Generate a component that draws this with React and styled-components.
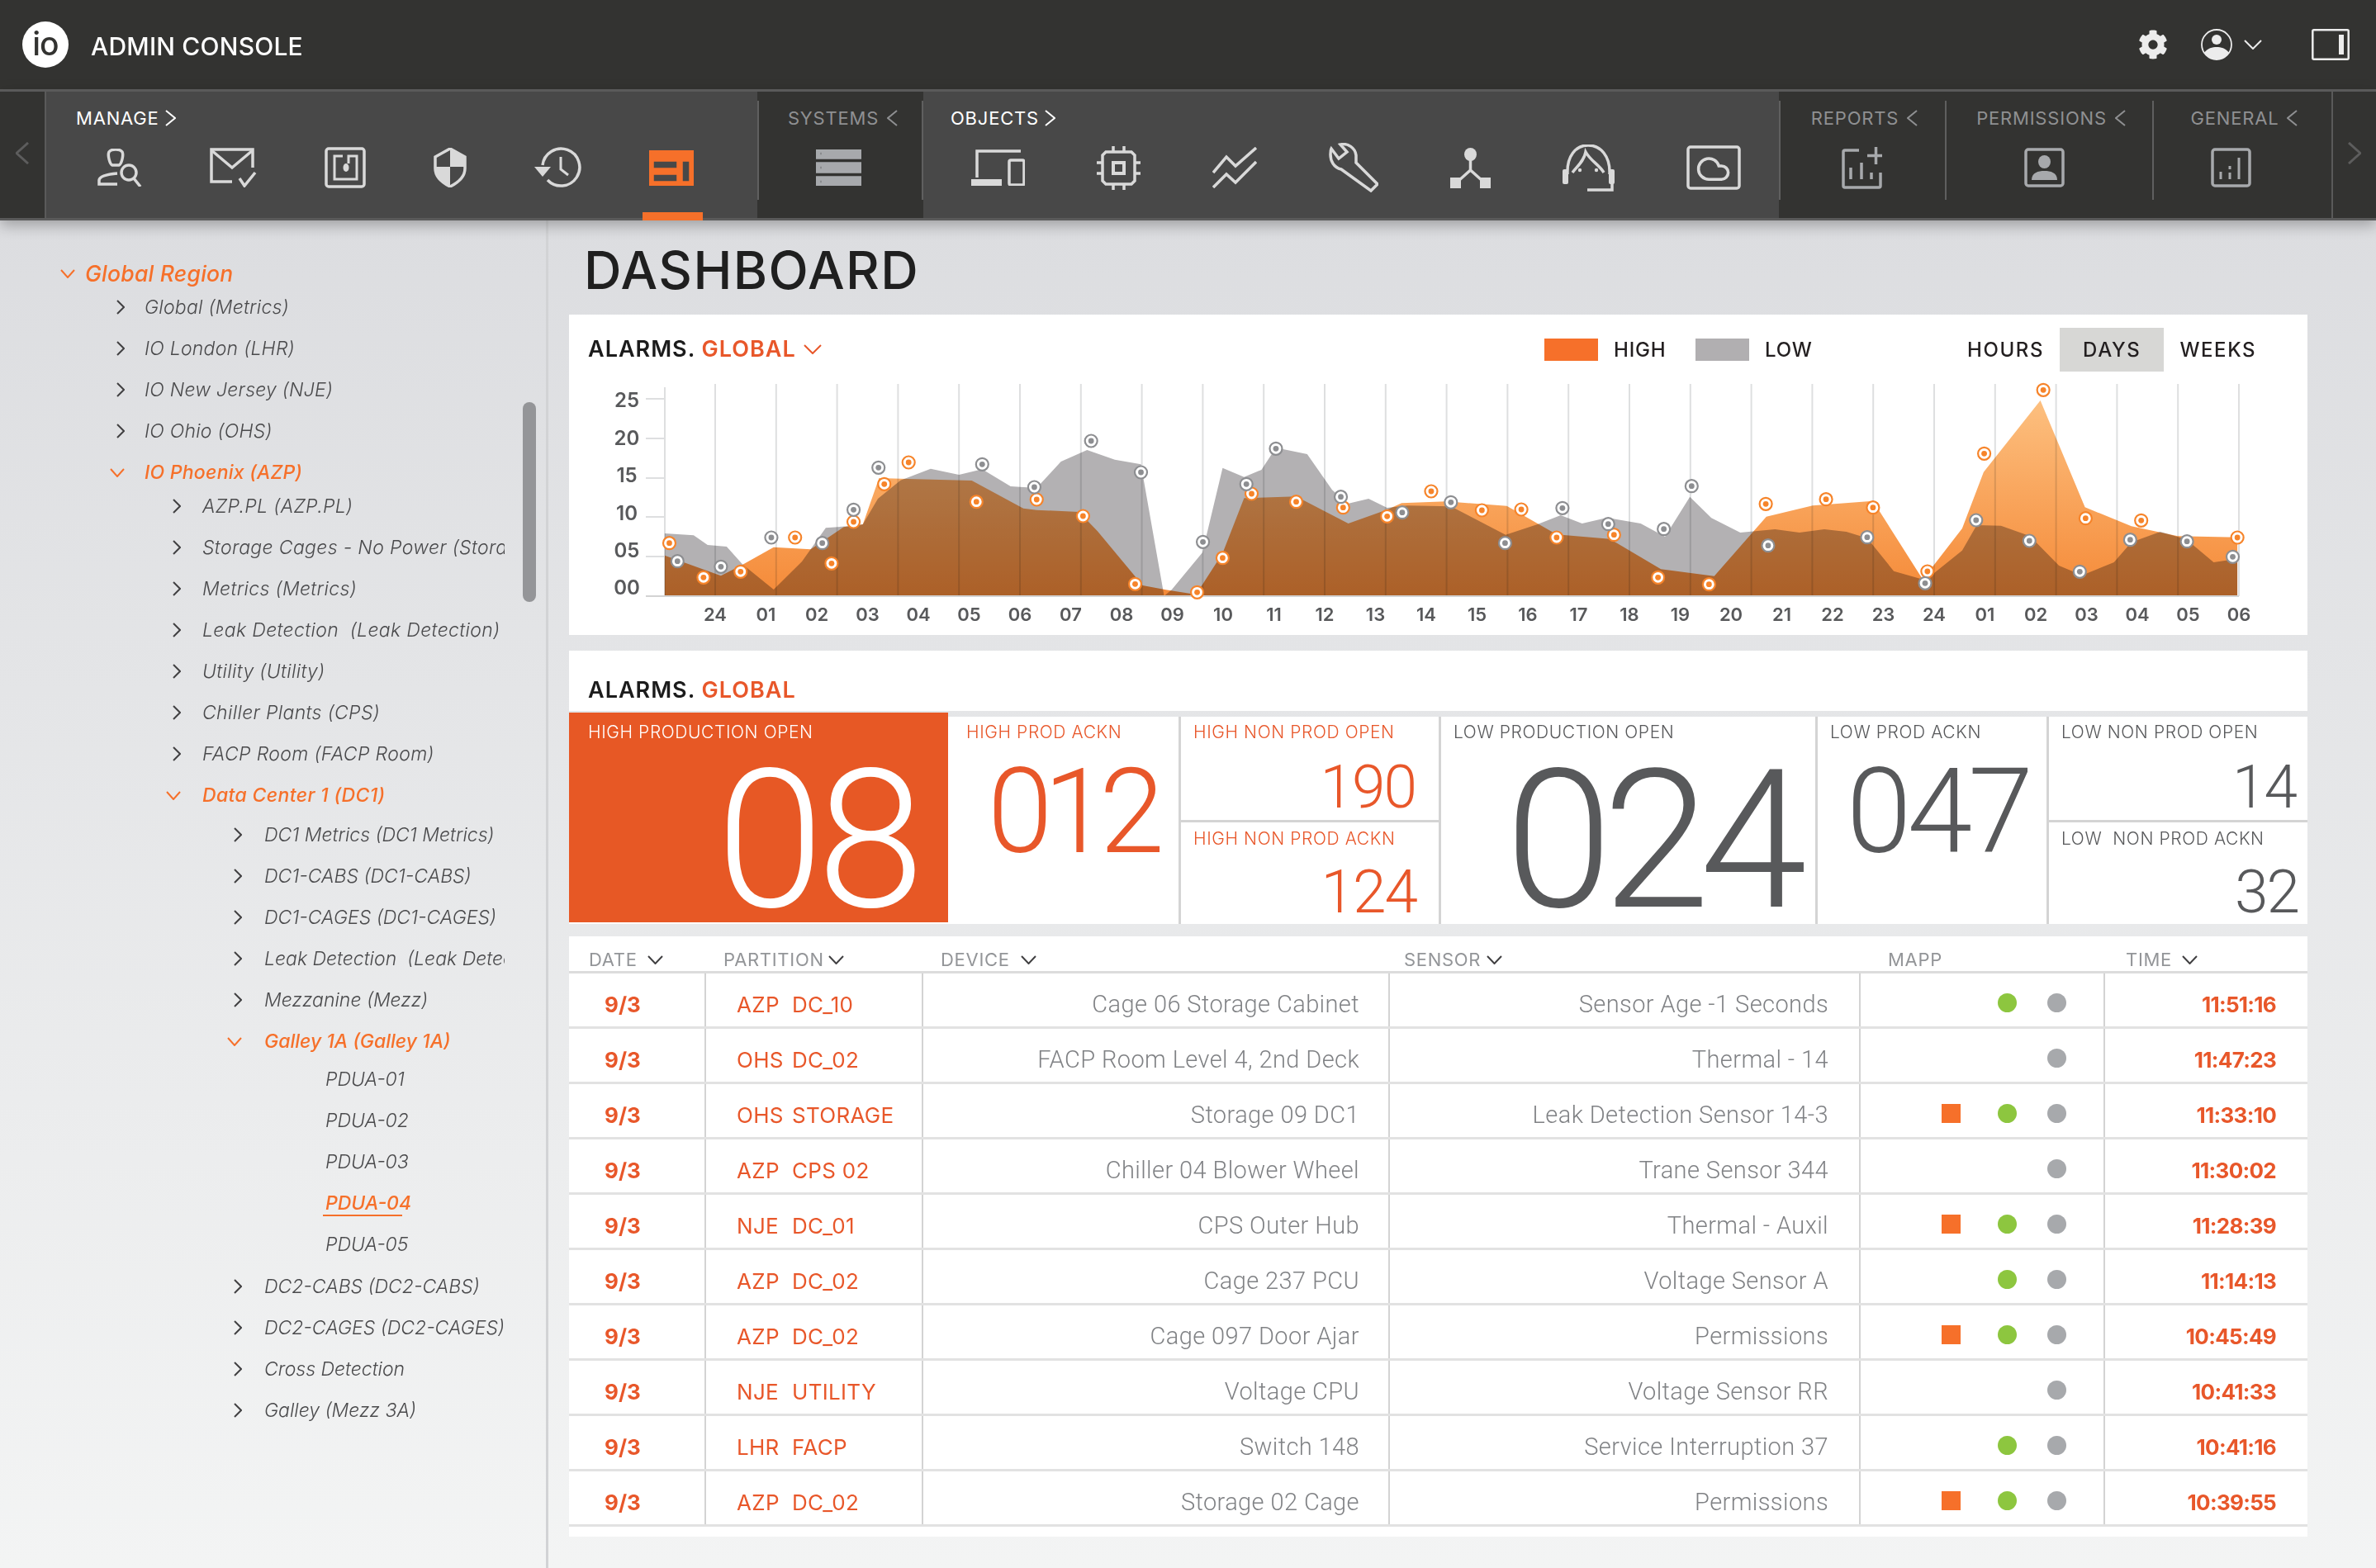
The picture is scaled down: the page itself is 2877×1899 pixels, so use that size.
import React from 'react';
import styled, { createGlobalStyle } from 'styled-components';
import { FaCog } from 'react-icons/fa';

const ORANGE = '#f6702a';
const RED = '#e8572a';
const SANS = '"Inter", "Liberation Sans", sans-serif';
const THIN = 'Roboto, "Liberation Sans", sans-serif';

const GlobalStyle = createGlobalStyle`
    html, body {
        margin: 0;
        padding: 0;
    }
    body {
        width: 2877px;
        font-family: ${SANS};
        background: #f3f4f4;
    }
`;

const Page = styled.div`
    display: flex;
    flex-direction: column;
    width: 2877px;
    height: 1899px;
    overflow: hidden;
`;

const TopBar = styled.header`
    display: flex;
    align-items: center;
    flex: 0 0 108px;
    padding: 0 32px 0 27px;
    background: #333331;
    color: #fff;
`;
const Logo = styled.div`
    display: flex;
    align-items: center;
    justify-content: center;
    width: 56px;
    height: 56px;
    border-radius: 50%;
    background: #fff;
    color: #333331;
    font-size: 39px;
    font-weight: 500;
    letter-spacing: -1px;
    line-height: 1;
    padding-bottom: 4px;
    box-sizing: border-box;
`;
const AppName = styled.div`
    margin-left: 27px;
    padding-top: 4px;
    flex: 1;
    font-size: 30px;
    font-weight: 500;
    letter-spacing: 0.2px;
`;
const TopIcons = styled.div`
    display: flex;
    align-items: center;
    color: #ececec;
`;
const UserMenu = styled.div`
    display: flex;
    align-items: center;
    gap: 14px;
    margin: 0 60px 0 40px;
`;

const NavBar = styled.nav`
    position: relative;
    z-index: 2;
    display: flex;
    flex: 0 0 153px;
    border-top: 3px solid #5a5a5a;
    border-bottom: 3px solid #5a5a5a;
    background: #333331;
    box-shadow: 0 6px 16px rgba(0, 0, 0, 0.28);
`;
const NavArrow = styled.div`
    display: flex;
    align-items: center;
    justify-content: center;
    flex: 0 0 ${p => p.$width}px;
    box-sizing: border-box;
    color: #5d5d5d;
    padding-bottom: 4px;
    ${p => p.$side === 'left' ? 'border-right: 2px solid #5a5a5a;' : 'border-left: 2px solid #5a5a5a;'}
`;
const NavGroup = styled.div`
    position: relative;
    flex: 0 0 ${p => p.$width}px;
    box-sizing: border-box;
    display: flex;
    flex-direction: column;
    align-items: ${p => p.$open ? 'flex-start' : 'center'};
    padding: 21px 0 0 ${p => p.$inset || 0}px;
    background: ${p => p.$open ? '#484848' : '#333331'};
    color: ${p => p.$open ? '#d9d9d9' : '#a7a9ac'};

    ${p => !p.$open && `
        &::before {
            content: '';
            position: absolute;
            left: 0;
            top: 11px;
            bottom: 22px;
            width: 2px;
            background: #5f5f5f;
        }
    `}
    ${p => p.$closing && `
        &::after {
            content: '';
            position: absolute;
            right: 0;
            top: 11px;
            bottom: 22px;
            width: 2px;
            background: #5f5f5f;
        }
    `}
`;
const NavLabel = styled.div`
    display: flex;
    align-items: center;
    gap: ${p => p.$open ? 7 : 10}px;
    height: 22px;
    margin-left: ${p => p.$open ? 0 : 6}px;
    font-size: 22px;
    letter-spacing: 0.8px;
    color: ${p => p.$open ? '#fff' : '#8f9092'};
`;
const NavIcons = styled.div`
    display: flex;
    align-items: center;
    gap: ${p => p.$gap || 0}px;
    height: 54px;
    margin-top: 22px;
    margin-left: ${p => p.$nudge || 0}px;
    margin-right: ${p => p.$shift || 0}px;
`;
const NavItem = styled.div`
    position: relative;
    color: ${p => p.$active ? ORANGE : 'inherit'};

    ${p => p.$active && `
        &::after {
            content: '';
            position: absolute;
            left: -8px;
            right: -11px;
            top: 75px;
            height: 10px;
            background: ${ORANGE};
        }
    `}
`;
const Glyph = styled.svg`
    display: block;
    flex: none;
    fill: none;
    stroke: currentColor;
    stroke-width: 3.5;
`;

const Content = styled.div`
    display: flex;
    flex: 1;
    min-height: 0;
    background: linear-gradient(#dcdde0, #f3f4f4);
`;

const Sidebar = styled.aside`
    position: relative;
    flex: 0 0 661px;
    padding-top: 39px;
    border-right: 3px solid #d2d3d5;
`;
const TreeRow = styled.div`
    display: flex;
    align-items: center;
    box-sizing: border-box;
    width: 611px;
    height: 50px;
    margin-top: ${p => -(p.$pull || 0)}px;
    padding-left: ${p => p.$pad}px;
    overflow: hidden;
    white-space: pre;
    font-style: italic;
    font-size: ${p => p.$root ? 26.5 : 23}px;
    letter-spacing: ${p => p.$track}px;
    font-weight: ${p => p.$open || p.$active ? 500 : 300};
    color: ${p => p.$open || p.$active ? ORANGE : '#4a4a4c'};
`;
const TreeChevron = styled.span`
    display: flex;
    justify-content: flex-end;
    flex: 0 0 24px;
    margin-right: ${p => p.$gap}px;
    color: ${p => p.$open ? ORANGE : '#414042'};
`;
const TreeText = styled.span`
    position: relative;
    ${p => p.$active && `
        &::after {
            content: '';
            position: absolute;
            left: -3px;
            width: 96px;
            bottom: -2px;
            height: 2px;
            background: ${ORANGE};
        }
    `}
`;
const Scrollbar = styled.div`
    position: absolute;
    left: 633px;
    top: 220px;
    width: 16px;
    height: 242px;
    border-radius: 8px;
    background: #949598;
`;

const Main = styled.main`
    flex: 1;
    padding: 0 83px 0 25px;
`;
const PageTitle = styled.h1`
    display: flex;
    align-items: center;
    height: 114px;
    margin: 0 0 0 18px;
    padding-top: 6px;
    box-sizing: border-box;
    font-size: 63px;
    font-weight: 500;
    letter-spacing: 1.4px;
    color: #1f1f1f;
`;
const Card = styled.section`
    background: #fff;
`;
const ChartHeader = styled.div`
    display: flex;
    align-items: center;
    height: 84px;
    padding-left: 23px;
`;
const CardTitle = styled.div`
    display: flex;
    align-items: center;
    gap: 9px;
    font-size: 27px;
    font-weight: 600;
    letter-spacing: 1px;
    line-height: 28px;
    color: #1c1c1c;
    flex: ${p => p.$basis ? `0 0 ${p.$basis}px` : 'none'};

    em {
        font-style: normal;
        color: ${RED};
    }
    svg {
        color: ${RED};
    }
`;
const Legend = styled.div`
    display: flex;
    flex: 0 0 493px;
    align-items: center;
`;
const LegendItem = styled.div`
    display: flex;
    align-items: center;
    gap: 19px;
    width: 183px;
    font-size: 24px;
    font-weight: 500;
    letter-spacing: 0.8px;
    color: #231f20;

    i {
        width: 65px;
        height: 27px;
        background: ${p => p.$color};
    }
`;
const Toggle = styled.div`
    display: flex;
    align-items: center;
    height: 53px;
    padding: 0 ${p => p.$active ? 28 : 19}px;
    font-size: 24px;
    font-weight: 500;
    letter-spacing: 1.6px;
    color: #231f20;
    background: ${p => p.$active ? '#d7d7d5' : 'transparent'};
`;
const ChartSvg = styled.svg`
    display: block;
    overflow: visible;
`;
const AxisText = styled.text`
    font-family: ${SANS};
    font-weight: 600;
    font-size: ${p => p.$size}px;
    fill: #58595b;
    text-anchor: middle;
    dominant-baseline: central;
`;

const TilesHeader = styled(Card)`
    margin-top: 19px;
    height: 73px;
    box-sizing: border-box;
    padding: 34px 0 0 23px;
`;
const Tiles = styled.div`
    display: grid;
    grid-template-columns: 459px 279px 315px 456px 280px 316px;
    grid-template-rows: 251px;
    margin-top: 7px;
    background: #fff;
`;
const Tile = styled.div`
    box-sizing: border-box;
    height: ${p => p.$hot ? '254px' : 'auto'};
    margin-top: ${p => p.$hot ? '-5px' : 0};
    padding: ${p => p.$hot ? 14 : 9}px ${p => p.$right}px 0 ${p => p.$left}px;
    background: ${p => p.$hot ? '#e75825' : '#fff'};
    color: ${p => p.$hot ? '#fff' : p.$tone};
    ${p => p.$divided && 'border-left: 3px solid #d4d4d4;'}
`;
const TileStack = styled.div`
    display: grid;
    grid-template-rows: 125px 126px;
    border-left: 3px solid #d4d4d4;
    color: ${p => p.$tone};
`;
const StackTile = styled.div`
    box-sizing: border-box;
    padding: 9px ${p => p.$right}px 0 15px;
    ${p => p.$lower && 'border-top: 3px solid #d4d4d4; padding-top: 10px;'}
`;
const TileLabel = styled.div`
    height: 20px;
    line-height: 20px;
    font-size: 21px;
    font-weight: 300;
    letter-spacing: 0.6px;
    white-space: pre;
`;
const sizes = {
    lg: { font: 234, top: 35, track: -8 },
    md: { font: 142, top: 34, track: -5 },
    sm: { font: 73, top: 29, track: -2 },
};
// line-height .74 makes the line box as tall as the digits, so it stays clear of the label
const TileNumber = styled.div`
    font-family: ${THIN};
    font-weight: 300;
    line-height: 0.74;
    text-align: right;
    white-space: nowrap;
    font-size: ${p => sizes[p.$size].font}px;
    margin-top: ${p => p.$top ?? sizes[p.$size].top}px;
    letter-spacing: ${p => p.$track ?? sizes[p.$size].track}px;
`;

const AlarmTable = styled(Card)`
    margin-top: 15px;
    padding-bottom: 12px;
`;
const columns = '164px 263px 565px 570px 296px 247px';
const HeadRow = styled.div`
    display: grid;
    grid-template-columns: ${columns};
    height: 42px;
    border-bottom: 3px solid #dcdcdc;
    box-sizing: content-box;
`;
const HeadCell = styled.div`
    display: flex;
    align-items: center;
    gap: ${p => p.$gap}px;
    padding: 14px 0 0 ${p => p.$pad}px;
    font-size: 22px;
    letter-spacing: 0.7px;
    color: #939598;
    svg {
        color: #414042;
    }
`;
const Row = styled.div`
    display: grid;
    grid-template-columns: ${columns};
    height: 64px;
    border-bottom: 3px solid #e2e2e2;
`;
const Cell = styled.div`
    display: flex;
    align-items: center;
    justify-content: ${p => p.$end ? 'flex-end' : 'flex-start'};
    box-sizing: border-box;
    padding: 10px ${p => p.$right || 0}px 0 ${p => p.$left || 0}px;
    ${p => p.$line && 'border-left: 2px solid #d3d3d3;'}
    white-space: nowrap;
`;
const DateText = styled.span`
    font-size: 26px;
    font-weight: 700;
    color: ${RED};
`;
const Partition = styled.span`
    display: flex;
    font-size: 26px;
    letter-spacing: 0.3px;
    color: ${RED};
    span:first-child {
        width: 67px;
    }
`;
const Faint = styled.span`
    font-family: ${THIN};
    font-weight: 300;
    font-size: 29px;
    letter-spacing: 0.4px;
    color: #808285;
`;
const MapIcons = styled(Cell)`
    gap: 37px;
    padding-top: 6px;
`;
const Flag = styled.i`
    width: 23px;
    height: 23px;
    margin-right: 8px;
    background: ${ORANGE};
`;
const Dot = styled.i`
    width: 23px;
    height: 23px;
    border-radius: 50%;
    background: ${p => p.$color};
`;
const TimeText = styled(DateText)`
    letter-spacing: -0.7px;
`;

const Chevron = ({ dir = 'right', w, h, sw = 2 }) => {
    const d = {
        right: `M1 1 L${w - 1} ${h / 2} L1 ${h - 1}`,
        left: `M${w - 1} 1 L1 ${h / 2} L${w - 1} ${h - 1}`,
        down: `M1 1 L${w / 2} ${h - 1} L${w - 1} 1`,
    }[dir];
    return <svg width={w} height={h} viewBox={`0 0 ${w} ${h}`} fill="none" stroke="currentColor" strokeWidth={sw} style={{ display: 'block', flex: 'none' }}>
        <path d={d} />
    </svg>;
};

const UserSearchIcon = () => <Glyph width="54" height="46" viewBox="0 0 54 46">
    <path d="M14 4 C17 0 27 0 30 4 C32 8 29 19 26 20 H18 C15 19 12 8 14 4 Z" />
    <path d="M24 30 C12 31 3 33 2 38 V43 H24" />
    <circle cx="38" cy="29" r="9" />
    <path d="M44 36 L52 46" />
</Glyph>;
const MailCheckIcon = () => <Glyph width="57" height="48" viewBox="0 0 57 48">
    <path d="M52 24 V2 H2 V41 H27" />
    <path d="M2 3 L27 24 L52 3" />
    <path d="M36 37 L42 46 L55 30" />
</Glyph>;
const TagIcon = () => <Glyph width="50" height="50" viewBox="0 0 50 50">
    <rect x="2" y="2" width="46" height="46" rx="3" />
    <path d="M22 11 H12 V39 H39 V11 H29 V20" strokeWidth="3" />
    <ellipse cx="26" cy="25" rx="3.5" ry="5" fill="currentColor" stroke="none" />
</Glyph>;
const ShieldIcon = () => <Glyph width="40" height="48" viewBox="0 0 40 48" strokeWidth="2.5">
    <path d="M20 1 L38 11 V25 C38 36 28 43 20 47 C12 43 2 36 2 25 V11 Z" />
    <path d="M20 1 L38 11 V23 H20 Z M20 23 V47 C12 43 2 36 2 25 V23 Z" fill="currentColor" stroke="none" />
</Glyph>;
const HistoryIcon = () => <Glyph width="57" height="50" viewBox="0 0 57 50">
    <path d="M10 22 A22.5 22.5 0 1 1 16 40" />
    <path d="M0 24 H20 L10 36 Z" fill="currentColor" stroke="none" />
    <path d="M32 12 V27 L41 34" strokeWidth="3" />
</Glyph>;
const LayoutIcon = () => <Glyph width="54" height="43" viewBox="0 0 54 43" stroke="none">
    <path fillRule="evenodd" fill="currentColor" d="M4 0 H50 A4 4 0 0 1 54 4 V39 A4 4 0 0 1 50 43 H4 A4 4 0 0 1 0 39 V4 A4 4 0 0 1 4 0 Z M4 12 V23 H35 V12 Z M4 28 V39 H35 V28 Z M39 12 V39 H50 V12 Z" />
</Glyph>;
const ServersIcon = () => <Glyph width="55" height="44" viewBox="0 0 55 44" stroke="none">
    {[0, 17, 34].map(y => <g key={y}>
        <rect y={y} width="55" height="10" fill="currentColor" />
        <rect x="4" y={y + 2} width="4" height="6" fill="#333331" />
    </g>)}
</Glyph>;
const DevicesIcon = () => <Glyph width="65" height="44" viewBox="0 0 65 44" strokeWidth="3">
    <path d="M60 2 H7 V34" />
    <rect y="36" width="37" height="8" fill="currentColor" stroke="none" />
    <rect x="46" y="13" width="18" height="30" rx="2" />
</Glyph>;
const ChipIcon = () => <Glyph width="53" height="53" viewBox="0 0 53 53" strokeWidth="3.5">
    <path d="M11 7 H42 L46 11 V42 L42 46 H11 L7 42 V11 Z" />
    <rect x="20" y="20" width="13" height="13" strokeWidth="4" />
    <path d="M20 0 V7 M33 0 V7 M20 46 V53 M33 46 V53 M0 20 H7 M0 33 H7 M46 20 H53 M46 33 H53" />
</Glyph>;
const TrendIcon = () => <Glyph width="54" height="50" viewBox="0 0 54 50" strokeWidth="3">
    <path d="M53 1 L28 23 L17 12 L1 31" />
    <path d="M53 18 L28 43 L17 33 L1 49" />
</Glyph>;
const WrenchIcon = () => <Glyph width="60" height="60" viewBox="0 0 60 60" strokeWidth="3">
    <path d="M14 2 C23 0 32 6 33 15 C33 18 33 21 33 24 L59 50 L51 58 L15 32 C6 30 2 22 2 14 C2 11 2 9 3 7 L12 19 L22 11 Z" />
</Glyph>;
const NetworkIcon = () => <Glyph width="49" height="49" viewBox="0 0 49 49" strokeWidth="3">
    <ellipse cx="24.5" cy="8" rx="7.5" ry="8" fill="currentColor" stroke="none" />
    <path d="M24.5 14 V27 L10 40 M24.5 27 L39 40" />
    <rect y="36" width="13" height="13" fill="currentColor" stroke="none" />
    <rect x="36" y="36" width="13" height="13" fill="currentColor" stroke="none" />
</Glyph>;
const HeadsetIcon = () => <Glyph width="63" height="57" viewBox="0 0 63 57" strokeWidth="3">
    <path d="M6 36 C5 14 16 1 31 1 C46 1 58 14 57 36" />
    <path d="M12 34 C18 26 26 20 28 9 C34 20 44 24 50 34" />
    <circle cx="21" cy="31" r="2.2" fill="currentColor" stroke="none" />
    <circle cx="41" cy="31" r="2.2" fill="currentColor" stroke="none" />
    <rect y="30" width="7" height="18" rx="2" fill="currentColor" stroke="none" />
    <rect x="56" y="30" width="7" height="18" rx="2" fill="currentColor" stroke="none" />
    <path d="M60 47 V55 H30" />
</Glyph>;
const CloudTabletIcon = () => <Glyph width="66" height="54" viewBox="0 0 66 54" strokeWidth="3.5">
    <rect x="2" y="2" width="62" height="50" rx="3" />
    <path transform="translate(11 7) scale(1.8)" strokeWidth="2" d="M17.5 19H9a7 7 0 1 1 6.71-9h1.79a4.5 4.5 0 1 1 0 9Z" />
</Glyph>;
const ReportPlusIcon = () => <Glyph width="49" height="52" viewBox="0 0 49 52" strokeWidth="3.5">
    <path d="M21 5 H4 A2 2 0 0 0 2 7 V48 A2 2 0 0 0 4 50 H45 A2 2 0 0 0 47 48 V32" />
    <path d="M41.5 1 V22 M31 11.5 H49" />
    <path d="M11 26 V40 M24 20 V40 M36 32 V40" />
</Glyph>;
const PersonCardIcon = () => <Glyph width="49" height="48" viewBox="0 0 49 48">
    <rect x="2" y="2" width="45" height="44" rx="3" />
    <ellipse cx="24.5" cy="17" rx="7.5" ry="8" fill="currentColor" stroke="none" />
    <path d="M9 39 C9 30 17 28 24.5 28 C32 28 40 30 40 39 Z" fill="currentColor" stroke="none" />
</Glyph>;
const ChartCardIcon = () => <Glyph width="49" height="48" viewBox="0 0 49 48">
    <rect x="2" y="2" width="45" height="44" rx="3" />
    <path d="M12 29 V38 M23 22 V26 M23 30 V38 M34 12 V38" strokeWidth="3" />
</Glyph>;
const UserIcon = () => <svg width="38" height="38" viewBox="0 0 38 38" style={{ display: 'block' }}>
    <circle cx="19" cy="19" r="18" fill="none" stroke="#ececec" strokeWidth="1.8" />
    <circle cx="19" cy="13" r="6" fill="#ececec" />
    <path d="M4 29 C8 23 14 22 19 22 C24 22 30 23 34 29 A18 18 0 0 1 4 29 Z" fill="#ececec" />
</svg>;
const PanelIcon = () => <svg width="46" height="38" viewBox="0 0 46 38" style={{ display: 'block' }}>
    <rect x="1.3" y="1.3" width="43.4" height="35.4" rx="1.5" fill="none" stroke="#ececec" strokeWidth="2.5" />
    <rect x="33" y="7" width="6" height="24" fill="#ececec" />
</svg>;

const manageIcons = [UserSearchIcon, MailCheckIcon, TagIcon, ShieldIcon, HistoryIcon, LayoutIcon];
const objectIcons = [DevicesIcon, ChipIcon, TrendIcon, WrenchIcon, NetworkIcon, HeadsetIcon, CloudTabletIcon];

const tree = [
    { label: 'Global Region', level: 0, open: true },
    { label: 'Global (Metrics)', level: 1, pull: 9 },
    { label: 'IO London (LHR)', level: 1 },
    { label: 'IO New Jersey (NJE)', level: 1 },
    { label: 'IO Ohio (OHS)', level: 1 },
    { label: 'IO Phoenix (AZP)', level: 1, open: true },
    { label: 'AZP.PL (AZP.PL)', level: 2, pull: 9 },
    { label: 'Storage Cages - No Power (Storage Cages)', level: 2 },
    { label: 'Metrics (Metrics)', level: 2 },
    { label: 'Leak Detection  (Leak Detection)', level: 2 },
    { label: 'Utility (Utility)', level: 2 },
    { label: 'Chiller Plants (CPS)', level: 2 },
    { label: 'FACP Room (FACP Room)', level: 2 },
    { label: 'Data Center 1 (DC1)', level: 2, open: true },
    { label: 'DC1 Metrics (DC1 Metrics)', level: 3, pull: 2 },
    { label: 'DC1-CABS (DC1-CABS)', level: 3 },
    { label: 'DC1-CAGES (DC1-CAGES)', level: 3 },
    { label: 'Leak Detection  (Leak Detection)', level: 3 },
    { label: 'Mezzanine (Mezz)', level: 3 },
    { label: 'Galley 1A (Galley 1A)', level: 3, open: true },
    { label: 'PDUA-01', leaf: true, pull: 4 },
    { label: 'PDUA-02', leaf: true },
    { label: 'PDUA-03', leaf: true },
    { label: 'PDUA-04', leaf: true, active: true },
    { label: 'PDUA-05', leaf: true },
    { label: 'DC2-CABS (DC2-CABS)', level: 3, pull: -1 },
    { label: 'DC2-CAGES (DC2-CAGES)', level: 3 },
    { label: 'Cross Detection', level: 3 },
    { label: 'Galley (Mezz 3A)', level: 3 },
];
const levels = [
    { pad: 67, gap: 12, track: 0.25 },
    { pad: 127, gap: 24, track: 0.25 },
    { pad: 195, gap: 26, track: 0.35 },
    { pad: 269, gap: 27, track: 0 },
];

// chart outline read off the picture: L points are measured from x=680, R points from x=1760
const L = ([x, y]) => [680 + x / 1.4255, 380 + y / 3];
const R = ([x, y]) => [1760 + x / 1.4255, 380 + y / 3];
const toPoints = pts => pts.map(([x, y]) => `${x.toFixed(1)},${y.toFixed(1)}`).join(' ');

const highArea = [
    ...[[178, 1025], [178, 878], [275, 952], [312, 912], [366, 848], [430, 856], [487, 775], [520, 765], [548, 597], [598, 600], [708, 606], [797, 707], [820, 713], [893, 720], [925, 790], [1003, 987], [1043, 1003], [1095, 1020], [1141, 870], [1178, 670], [1268, 664], [1358, 762], [1425, 712], [1450, 688], [1527, 682]].map(L),
    ...[[92, 698], [178, 802], [270, 818], [358, 928], [450, 953], [540, 737], [620, 697], [724, 680], [810, 965], [878, 780], [915, 575], [1013, 315], [1090, 703], [1170, 772], [1250, 808], [1353, 812], [1353, 1025]].map(R),
];
const lowArea = [
    ...[[178, 1025], [178, 798], [228, 805], [252, 840], [285, 846], [312, 910], [366, 1002], [415, 900], [456, 778], [505, 770], [520, 765], [546, 672], [585, 605], [637, 563], [686, 585], [726, 565], [775, 627], [820, 633], [862, 537], [907, 495], [955, 530], [1000, 547], [1040, 1025], [1053, 1003], [1106, 868], [1141, 560], [1178, 593], [1208, 567], [1233, 487], [1287, 510], [1330, 640], [1357, 690], [1393, 672], [1425, 705], [1460, 697], [1535, 700]].map(L),
    ...[[90, 803], [145, 765], [185, 732], [222, 762], [265, 741], [323, 762], [365, 810], [408, 665], [445, 742], [495, 795], [555, 783], [597, 795], [640, 783], [678, 792], [714, 815], [760, 935], [810, 965], [828, 945], [878, 860], [903, 768], [945, 770], [995, 808], [1045, 915], [1085, 950], [1140, 903], [1170, 830], [1220, 792], [1265, 820], [1312, 903], [1353, 890], [1353, 1025]].map(R),
];
const highDots = [
    ...[[186, 833], [245, 958], [309, 937], [403, 813], [466, 907], [504, 756], [557, 619], [599, 540], [716, 683], [820, 675], [900, 735], [990, 982], [1097, 1012], [1141, 887], [1191, 654], [1268, 683], [1349, 704], [1425, 736], [1501, 645]].map(L),
    ...[[49, 714], [117, 711], [178, 813], [277, 803], [353, 958], [441, 983], [539, 691], [643, 674], [724, 704], [818, 936], [916, 508], [1018, 277], [1091, 743], [1187, 751], [1353, 813]].map(R),
];
const lowDots = [
    ...[[200, 899], [275, 919], [362, 813], [450, 833], [504, 712], [547, 559], [726, 547], [816, 630], [914, 462], [1000, 576], [1107, 829], [1182, 619], [1233, 490], [1345, 665], [1451, 722], [1535, 685]].map(L),
    ...[[89, 833], [188, 706], [267, 764], [363, 782], [411, 626], [543, 842], [714, 812], [814, 979], [902, 750], [994, 825], [1081, 937], [1168, 821], [1266, 827], [1345, 883]].map(R),
];
const days = ['24', ...Array.from({ length: 24 }, (_, i) => String(i + 1).padStart(2, '0')), '01', '02', '03', '04', '05', '06'];
const yLabels = [['25', 484], ['20', 530], ['15', 575], ['10', 621], ['05', 666], ['00', 711]];
const yTicks = [483, 531, 579, 626, 674, 722];

const Marker = ({ x, y, color }) => <g>
    <circle cx={x} cy={y} r="7.5" fill="#fff" stroke={color} strokeWidth="2.2" />
    <circle cx={x} cy={y} r="3.4" fill={color} />
</g>;

const AlarmChart = () => <ChartSvg width="2105" height="304" viewBox="689 465 2105 304">
    <defs>
        <linearGradient id="highFill" gradientUnits="userSpaceOnUse" x1="0" y1="470" x2="0" y2="722">
            <stop offset="0" stopColor="#fdc384" />
            <stop offset="1" stopColor="#f58a38" />
        </linearGradient>
    </defs>
    {Array.from({ length: 26 }, (_, i) => <line key={i} x1={866 + i * 73.8} x2={866 + i * 73.8} y1="465" y2="722" stroke="#dedfe0" strokeWidth="2" />)}
    <line x1="805" x2="805" y1="469" y2="722" stroke="#dedfe0" strokeWidth="2" />
    {yTicks.map(y => <line key={y} x1="782" x2="805" y1={y} y2={y} stroke="#dedfe0" strokeWidth="2" />)}
    <polygon points={toPoints(highArea)} fill="url(#highFill)" style={{ mixBlendMode: 'multiply' }} />
    <polygon points={toPoints(lowArea)} fill="#b3b1b3" style={{ mixBlendMode: 'multiply' }} />
    <line x1="782" x2="2711" y1="722" y2="722" stroke="#d3d3d3" strokeWidth="2" />
    {highDots.map(([x, y], i) => <Marker key={i} x={x} y={y} color="#f6842a" />)}
    {lowDots.map(([x, y], i) => <Marker key={i} x={x} y={y} color="#8d8e91" />)}
    {yLabels.map(([t, y]) => <AxisText key={t} x="759" y={y} $size="24">{t}</AxisText>)}
    {days.map((d, i) => <AxisText key={i} x={866 + i * 61.5} y="744" $size="22">{d}</AxisText>)}
</ChartSvg>;

const headers = [
    { label: 'DATE', pad: 24, gap: 12, sort: true },
    { label: 'PARTITION', pad: 23, gap: 5, sort: true },
    { label: 'DEVICE', pad: 23, gap: 13, sort: true },
    { label: 'SENSOR', pad: 19, gap: 7, sort: true },
    { label: 'MAPP', pad: 35 },
    { label: 'TIME', pad: 27, gap: 12, sort: true },
];
const GREEN = '#8dc63f';
const GRAY = '#a7a9ac';
const rows = [
    ['AZP', 'DC_10', 'Cage 06 Storage Cabinet', 'Sensor Age -1 Seconds', 'gg', '11:51:16'],
    ['OHS', 'DC_02', 'FACP Room Level 4, 2nd Deck', 'Thermal - 14', 'g', '11:47:23'],
    ['OHS', 'STORAGE', 'Storage 09 DC1', 'Leak Detection Sensor 14-3', 'fgg', '11:33:10'],
    ['AZP', 'CPS 02', 'Chiller 04 Blower Wheel', 'Trane Sensor 344', 'g', '11:30:02'],
    ['NJE', 'DC_01', 'CPS Outer Hub', 'Thermal - Auxil', 'fgg', '11:28:39'],
    ['AZP', 'DC_02', 'Cage 237 PCU', 'Voltage Sensor A', 'gg', '11:14:13'],
    ['AZP', 'DC_02', 'Cage 097 Door Ajar', 'Permissions', 'fgg', '10:45:49'],
    ['NJE', 'UTILITY', 'Voltage CPU', 'Voltage Sensor RR', 'g', '10:41:33'],
    ['LHR', 'FACP', 'Switch 148', 'Service Interruption 37', 'gg', '10:41:16'],
    ['AZP', 'DC_02', 'Storage 02 Cage', 'Permissions', 'fgg', '10:39:55'],
];

export default function App() {
    return <Page>
        <GlobalStyle />
        <TopBar>
            <Logo>io</Logo>
            <AppName>ADMIN CONSOLE</AppName>
            <TopIcons>
                <FaCog size={36} />
                <UserMenu>
                    <UserIcon />
                    <Chevron dir="down" w={22} h={12} sw={2} />
                </UserMenu>
                <PanelIcon />
            </TopIcons>
        </TopBar>

        <NavBar>
            <NavArrow $side="left" $width={56}><Chevron dir="left" w={16} h={27} sw={3} /></NavArrow>
            <NavGroup $open $width={861} $inset={36}>
                <NavLabel $open>MANAGE <Chevron w={13} h={20} /></NavLabel>
                <NavIcons $gap={82} $nudge={26}>
                    {manageIcons.map((Icon, i) => <NavItem key={i} $active={i === 5}><Icon /></NavItem>)}
                </NavIcons>
            </NavGroup>
            <NavGroup $width={201} $closing>
                <NavLabel>SYSTEMS <Chevron dir="left" w={13} h={20} /></NavLabel>
                <NavIcons $shift={4}><ServersIcon /></NavIcons>
            </NavGroup>
            <NavGroup $open $width={1036} $inset={33}>
                <NavLabel $open>OBJECTS <Chevron w={13} h={20} /></NavLabel>
                <NavIcons $gap={87} $nudge={25}>
                    {objectIcons.map((Icon, i) => <Icon key={i} />)}
                </NavIcons>
            </NavGroup>
            <NavGroup $width={201}>
                <NavLabel>REPORTS <Chevron dir="left" w={13} h={20} /></NavLabel>
                <NavIcons><ReportPlusIcon /></NavIcons>
            </NavGroup>
            <NavGroup $width={251}>
                <NavLabel>PERMISSIONS <Chevron dir="left" w={13} h={20} /></NavLabel>
                <NavIcons $shift={10}><PersonCardIcon /></NavIcons>
            </NavGroup>
            <NavGroup $width={217}>
                <NavLabel>GENERAL <Chevron dir="left" w={13} h={20} /></NavLabel>
                <NavIcons $shift={26}><ChartCardIcon /></NavIcons>
            </NavGroup>
            <NavArrow $side="right" $width={54}><Chevron w={16} h={27} sw={3} /></NavArrow>
        </NavBar>

        <Content>
            <Sidebar>
                {tree.map((item, i) => {
                    const level = levels[item.level] || levels[3];
                    return <TreeRow key={i} $pull={item.pull} $pad={item.leaf ? 394 : level.pad} $track={level.track} $root={item.level === 0} $open={item.open} $active={item.active}>
                        {!item.leaf && <TreeChevron $gap={level.gap} $open={item.open}>
                            {item.open ? <Chevron dir="down" w={18} h={11} /> : <Chevron w={10} h={18} />}
                        </TreeChevron>}
                        <TreeText $active={item.active}>{item.label}</TreeText>
                    </TreeRow>;
                })}
                <Scrollbar />
            </Sidebar>

            <Main>
                <PageTitle>DASHBOARD</PageTitle>
                <Card>
                    <ChartHeader>
                        <CardTitle $basis={1158}>
                            <span>ALARMS. <em>GLOBAL</em></span>
                            <Chevron dir="down" w={22} h={12} />
                        </CardTitle>
                        <Legend>
                            <LegendItem $color={ORANGE}><i />HIGH</LegendItem>
                            <LegendItem $color="#b1afb1"><i />LOW</LegendItem>
                        </Legend>
                        <Toggle>HOURS</Toggle>
                        <Toggle $active>DAYS</Toggle>
                        <Toggle>WEEKS</Toggle>
                    </ChartHeader>
                    <AlarmChart />
                </Card>

                <TilesHeader>
                    <CardTitle><span>ALARMS. <em>GLOBAL</em></span></CardTitle>
                </TilesHeader>
                <Tiles>
                    <Tile $hot $left={23} $right={37}>
                        <TileLabel>HIGH PRODUCTION OPEN</TileLabel>
                        <TileNumber $size="lg">08</TileNumber>
                    </Tile>
                    <Tile $tone={RED} $left={22} $right={28}>
                        <TileLabel>HIGH PROD ACKN</TileLabel>
                        <TileNumber $size="md" $track={-11}>012</TileNumber>
                    </Tile>
                    <TileStack $tone={RED}>
                        <StackTile $right={28}>
                            <TileLabel>HIGH NON PROD OPEN</TileLabel>
                            <TileNumber $size="sm">190</TileNumber>
                        </StackTile>
                        <StackTile $lower $right={27}>
                            <TileLabel>HIGH NON PROD ACKN</TileLabel>
                            <TileNumber $size="sm" $top={27}>124</TileNumber>
                        </StackTile>
                    </TileStack>
                    <Tile $divided $tone="#58595b" $left={15} $right={22}>
                        <TileLabel>LOW PRODUCTION OPEN</TileLabel>
                        <TileNumber $size="lg" $track={-12}>024</TileNumber>
                    </Tile>
                    <Tile $divided $tone="#58595b" $left={15} $right={21}>
                        <TileLabel>LOW PROD ACKN</TileLabel>
                        <TileNumber $size="md">047</TileNumber>
                    </Tile>
                    <TileStack $tone="#58595b">
                        <StackTile $right={14}>
                            <TileLabel>LOW NON PROD OPEN</TileLabel>
                            <TileNumber $size="sm">14</TileNumber>
                        </StackTile>
                        <StackTile $lower $right={11}>
                            <TileLabel>LOW  NON PROD ACKN</TileLabel>
                            <TileNumber $size="sm" $top={27}>32</TileNumber>
                        </StackTile>
                    </TileStack>
                </Tiles>

                <AlarmTable>
                    <HeadRow>
                        {headers.map(h => <HeadCell key={h.label} $pad={h.pad} $gap={h.gap}>
                            {h.label}
                            {h.sort && <Chevron dir="down" w={19} h={11} />}
                        </HeadCell>)}
                    </HeadRow>
                    {rows.map(([site, part, device, sensor, map, time], i) => <Row key={i}>
                        <Cell $left={43}><DateText>9/3</DateText></Cell>
                        <Cell $line $left={37}><Partition><span>{site}</span><span>{part}</span></Partition></Cell>
                        <Cell $line $end $right={35}><Faint>{device}</Faint></Cell>
                        <Cell $line $end $right={37}><Faint>{sensor}</Faint></Cell>
                        <MapIcons $line $end $right={45}>
                            {map === 'fgg' && <Flag />}
                            {map !== 'g' && <Dot $color={GREEN} />}
                            <Dot $color={GRAY} />
                        </MapIcons>
                        <Cell $line $end $right={38}><TimeText>{time}</TimeText></Cell>
                    </Row>)}
                </AlarmTable>
            </Main>
        </Content>
    </Page>;
}
